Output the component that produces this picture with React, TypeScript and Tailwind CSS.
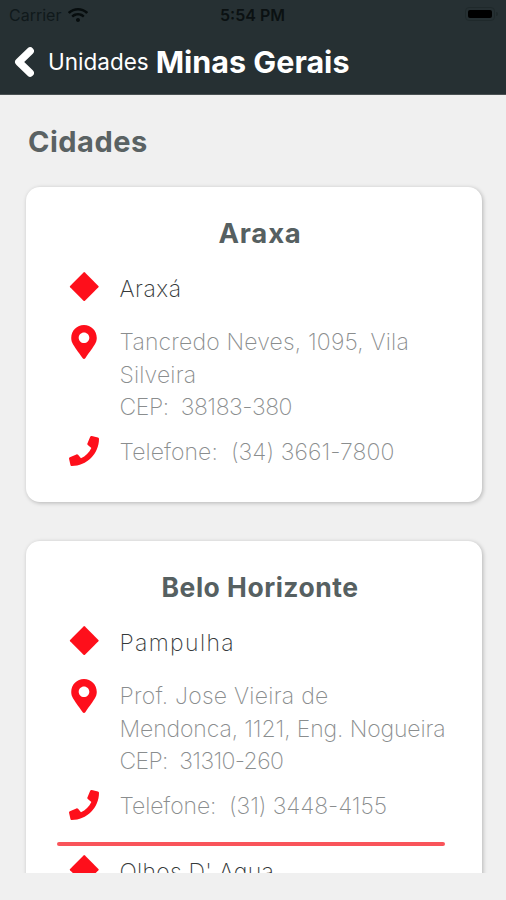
import type { ReactNode } from 'react'
import { FaMapMarkerAlt, FaPhone, FaWifi } from 'react-icons/fa'

type Line = { text: string; className: string }
type Unit = { name: Line; address: Line[]; phone?: Line }
type City = { title: Line; units: Unit[] }

const cities: City[] = [
  {
    title: { text: 'Araxa', className: 'text-[27.5px] tracking-[0.8px]' },
    units: [
      {
        name: { text: 'Araxá', className: 'tracking-[0.5px]' },
        address: [
          { text: 'Tancredo Neves, 1095, Vila', className: 'tracking-[0.17px]' },
          { text: 'Silveira', className: 'tracking-[0.15px]' },
          { text: 'CEP:  38183-380', className: 'tracking-[-0.43px]' },
        ],
        phone: { text: 'Telefone:  (34) 3661-7800', className: 'tracking-[0.07px]' },
      },
    ],
  },
  {
    title: { text: 'Belo Horizonte', className: 'text-[26.5px] tracking-[0.5px]' },
    units: [
      {
        name: { text: 'Pampulha', className: 'tracking-[1.35px]' },
        address: [
          { text: 'Prof. Jose Vieira de', className: 'tracking-[0.25px]' },
          { text: 'Mendonca, 1121, Eng. Nogueira', className: 'tracking-[-0.12px]' },
          { text: 'CEP:  31310-260', className: 'tracking-[-0.65px]' },
        ],
        phone: { text: 'Telefone:  (31) 3448-4155', className: 'tracking-[-0.1px]' },
      },
      {
        name: { text: "Olhos D' Agua", className: 'tracking-[0.25px]' },
        address: [],
      },
    ],
  },
]

function StatusBar() {
  return (
    <div className="flex h-7 items-center justify-between pl-[9px] pr-[8px] text-black">
      <div className="flex w-[158px] items-center gap-[7px] pt-px text-[16px] text-[#10191b]">
        <span>Carrier</span>
        <FaWifi className="h-[16px] w-[20px] text-[#070d0e]" />
      </div>
      <span className="pt-px text-[16px] font-semibold text-[#0b1112]">5:54 PM</span>
      <div className="flex w-[160px] items-center justify-end gap-px">
        <div className="h-[14px] w-[30px] rounded-[4px] border border-[#1f292b] p-[2px]">
          <div className="h-full rounded-[2px] bg-black" />
        </div>
        <div className="h-1 w-[2px] rounded-r bg-[#1f292b]" />
      </div>
    </div>
  )
}

function Row({ icon, className, children }: { icon: ReactNode; className: string; children: ReactNode }) {
  return (
    <div className={`flex ${className}`}>
      <div className="flex w-[54px] shrink-0 justify-center">{icon}</div>
      <div className="pl-[8.5px]">{children}</div>
    </div>
  )
}

function TextLine({ line }: { line: Line }) {
  return (
    <p className="h-[32.3px] text-[23px] leading-[32.3px] whitespace-pre">
      <span className={line.className}>{line.text}</span>
    </p>
  )
}

function UnitInfo({ unit }: { unit: Unit }) {
  return (
    <div className="pl-[31px] text-[#8a8d8e]">
      <Row className="text-[#35393a]" icon={<div className="mt-[4px] size-[20.5px] rotate-45 rounded-[1px] bg-[#fe0f1b]" />}>
        <div className="pt-px">
          <TextLine line={unit.name} />
        </div>
      </Row>
      {unit.address.length > 0 && (
        <Row className="mt-[19px]" icon={<FaMapMarkerAlt className="mt-px h-[34px] w-[26px] text-[#fe0f1b]" />}>
          <div className="pt-[2px]">
            {unit.address.map((line) => (
              <TextLine key={line.text} line={line} />
            ))}
          </div>
        </Row>
      )}
      {unit.phone && (
        <Row className="mt-[13px]" icon={<FaPhone className="size-[30px] text-[#fe0f1b]" />}>
          <TextLine line={unit.phone} />
        </Row>
      )}
    </div>
  )
}

function CityCard({ city }: { city: City }) {
  return (
    <section className="h-[315px] w-[456px] shrink-0 rounded-[14px] bg-white pt-[27px] shadow-[1px_1px_4px_rgba(0,0,0,0.25)] last:h-[500px]">
      <h2 className="mb-[20px] ml-[12px] h-[38px] text-center leading-[38px] font-bold text-[#566061]">
        <span className={city.title.className}>{city.title.text}</span>
      </h2>
      {city.units.map((unit, i) => (
        <div key={unit.name.text}>
          {i > 0 && <div className="mt-[20px] mb-[9px] ml-[31px] h-[4px] w-[388px] rounded-full bg-[#f9545a]" />}
          <UnitInfo unit={unit} />
        </div>
      ))}
    </section>
  )
}

export default function App() {
  return (
    <div className="flex h-[900px] w-[506px] flex-col overflow-hidden bg-[#f0f0f0] font-['Inter',sans-serif] font-extralight">
      <header className="h-[95px] shrink-0 border-b border-[#4a5153] bg-[#263033] font-normal">
        <StatusBar />
        <div className="flex h-[67px] items-center pl-[14px] text-white">
          <svg viewBox="0 0 20 30" className="h-[30px] w-[20px]" fill="none" stroke="currentColor" strokeWidth="7.4">
            <path d="M16.2 4 4.8 15l11.4 11" strokeLinecap="round" strokeLinejoin="round" />
          </svg>
          <span className="ml-[14px] text-[22.5px]">Unidades</span>
          <h1 className="ml-[7px] text-[30.5px] font-bold tracking-[0px]">Minas Gerais</h1>
        </div>
      </header>
      <main className="flex h-[778px] shrink-0 flex-col overflow-hidden pl-[26px]">
        <h2 className="mt-[28px] mb-[26px] ml-[2px] text-[29px] leading-[38px] font-bold tracking-[0.5px] text-[#5a6263]">
          Cidades
        </h2>
        <div className="flex flex-col gap-[39px]">
          {cities.map((city) => (
            <CityCard key={city.title.text} city={city} />
          ))}
        </div>
      </main>
    </div>
  )
}
